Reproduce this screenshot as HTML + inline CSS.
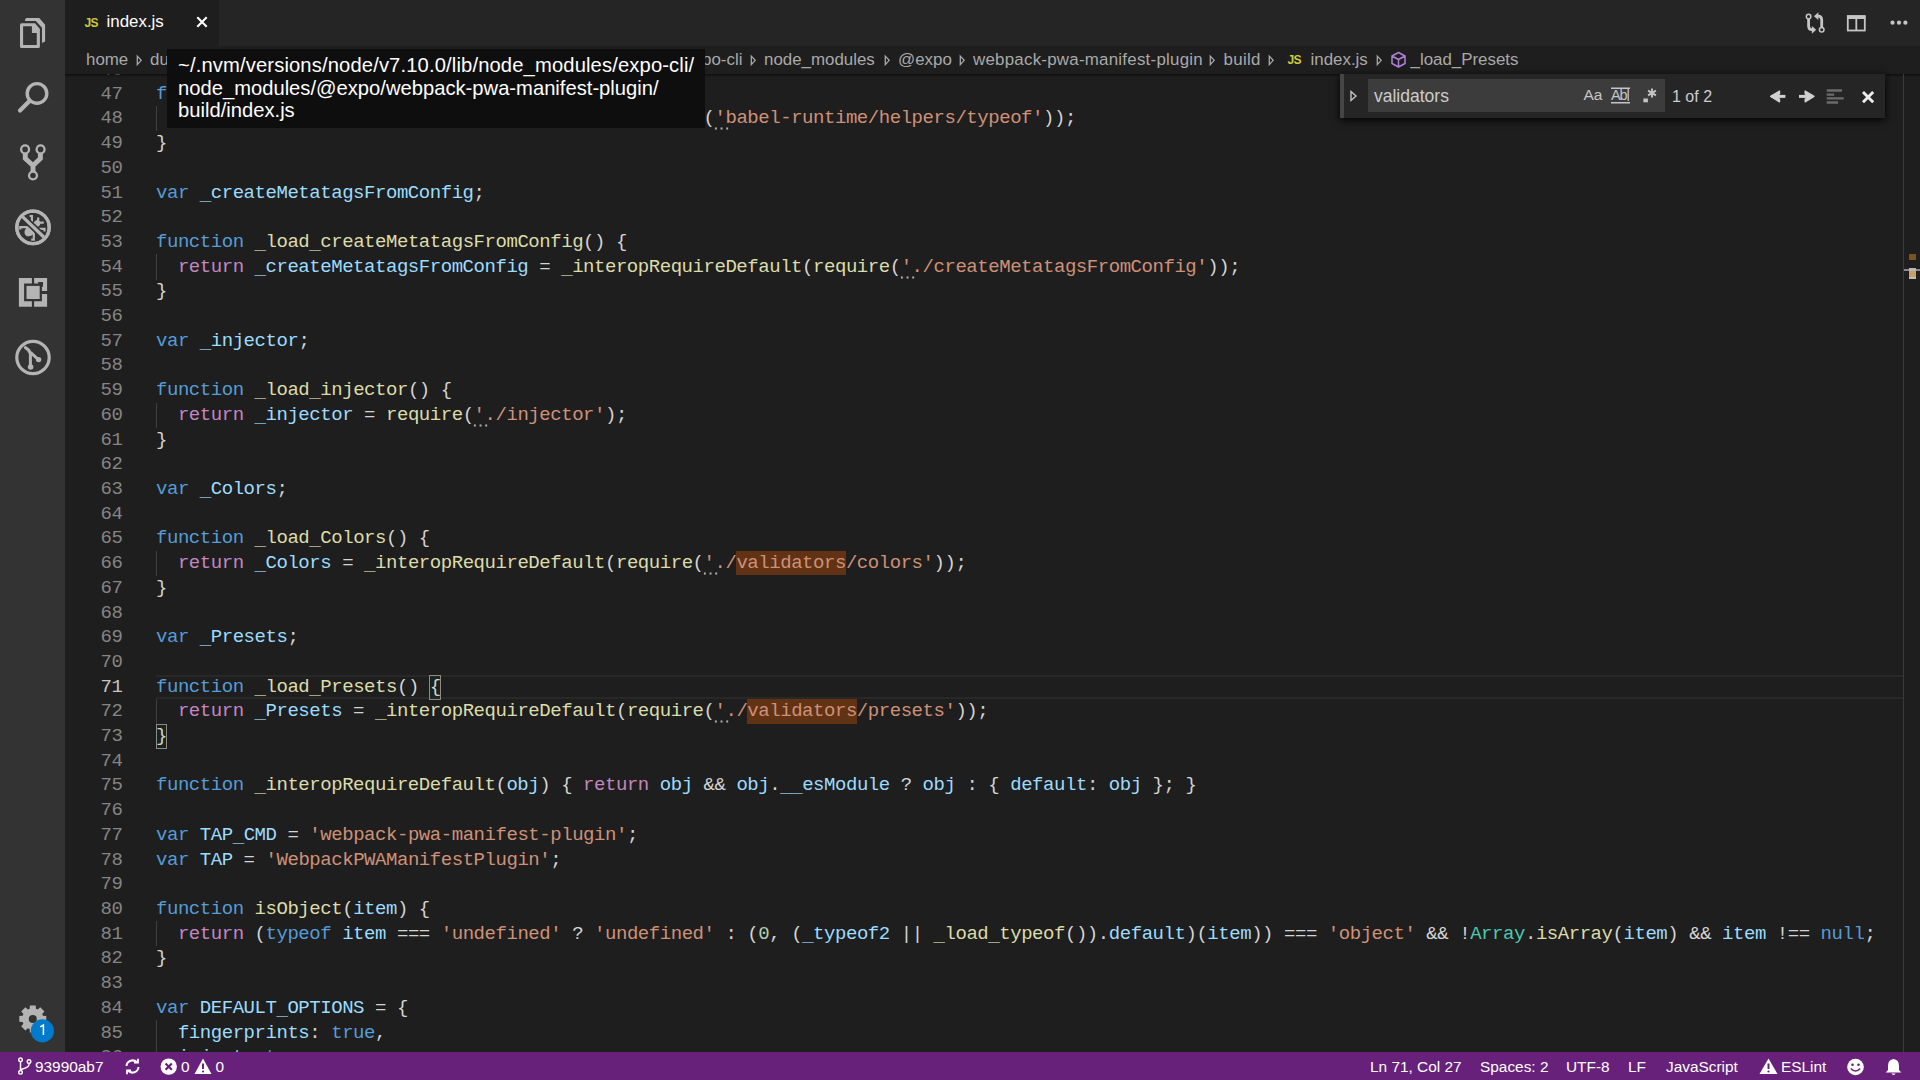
<!DOCTYPE html>
<html><head><meta charset="utf-8"><title>index.js</title><style>
*{margin:0;padding:0;box-sizing:border-box}
html,body{width:1920px;height:1080px;overflow:hidden;background:#1e1e1e}
body{position:relative;font-family:"Liberation Sans",sans-serif}
.abs{position:absolute}
#act{left:0;top:0;width:65px;height:1052px;background:#333333}
#tabs{left:65px;top:0;width:1855px;height:46px;background:#252526}
#tab{left:65px;top:0;width:154px;height:46px;background:#1e1e1e}
#bc{left:65px;top:46px;width:1855px;height:28px;background:#1e1e1e}
#ed{left:65px;top:74px;width:1855px;height:978px;overflow:hidden;background:#1e1e1e}
#edin{position:absolute;left:-65px;top:-74px;width:1920px;height:1080px}
.ln{position:absolute;left:156.0px;height:24.7px;line-height:24.7px;font-family:"Liberation Mono",monospace;font-size:19.000px;letter-spacing:-0.4520px;white-space:pre;padding-top:1px}
.gn{position:absolute;left:60px;width:62.5px;text-align:right;height:24.7px;line-height:24.7px;font-family:"Liberation Mono",monospace;font-size:19.000px;letter-spacing:-0.4520px;white-space:pre;padding-top:1px}
.u{position:relative;top:2.4px;opacity:0.7;font-style:normal}
.ig{position:absolute;left:156px;width:1px;height:25.2px;background:#404040}
.hint{position:absolute;width:17px;height:3px;background-image:radial-gradient(circle,#b0b0b0 0.9px,transparent 1.35px);background-size:5.7px 3px}
.fm{position:absolute;height:24.7px;background:rgba(234,92,0,0.33)}
.cl{position:absolute;left:156px;width:1747px;height:24px;border-top:2.7px solid #282828;border-bottom:2.7px solid #282828}
.bm{position:absolute;width:11.3px;height:24.6px;border:1.3px solid #8a8a8a;background:rgba(0,100,0,0.1)}
#shadow{left:65px;top:74px;width:1855px;height:3px;background:linear-gradient(rgba(0,0,0,0.55),rgba(0,0,0,0))}
#ruler{left:1903px;top:74px;width:1px;height:978px;background:#3a3a3a}
#status{left:0;top:1052px;width:1920px;height:28px;background:#68217a;color:#fff;font-size:15.4px}
.st{position:absolute;top:1px;line-height:28px;white-space:pre}
#tip{left:167px;top:49px;width:538px;height:78.5px;background:#0e0e0e;color:#fff;font-size:20.2px;line-height:22.6px;padding:5px 0 0 11px;white-space:pre}
#find{left:1340px;top:74px;width:545px;height:44px;background:#252526;box-shadow:0 2px 8px #000;border-left:4px solid #454545}
#findin{left:1368px;top:79px;width:297px;height:33px;background:#3c3c3c}
.ui{position:absolute;white-space:pre;font-size:16.9px}
.bct{top:4px}
.chev{position:absolute;top:0}
</style></head>
<body>
<div id="act" class="abs">
<svg width="65" height="1052" style="position:absolute;left:0;top:0" fill="none" stroke="#b4b4b4">
 <!-- explorer -->
 <path fill-rule="evenodd" fill="#b4b4b4" stroke="none" d="M21.6 23.3 H35 L39.9 29 V46.4 Q39.9 48 38.3 48 H21.6 Q20 48 20 46.4 V24.9 Q20 23.3 21.6 23.3 Z M23.1 26.2 V44.9 H36.8 V33 H31.9 V26.2 Z"/>
 <path fill="#b4b4b4" stroke="none" d="M26.8 18 H39.3 L45.1 24.8 V41.6 L42 42.9 V27.7 L35.8 21.1 H25 Q25 18 26.8 18 Z"/>
 <!-- search -->
 <circle cx="37" cy="93.4" r="9.8" stroke-width="3.4"/>
 <path d="M29.5 101 L20 110.5" stroke-width="4.2" stroke-linecap="round"/>
 <!-- git -->
 <circle cx="25.1" cy="149.4" r="3.95" stroke-width="2.3"/>
 <circle cx="40.6" cy="149.4" r="3.95" stroke-width="2.3"/>
 <circle cx="33" cy="175.5" r="3.95" stroke-width="2.3"/>
 <path d="M25.3 153 V158.5 L33 165.5 V171.5 M40.4 153 V158.5 L33 165.5" stroke-width="4.9" stroke-linejoin="miter"/>
 <!-- debug -->
 <circle cx="33" cy="227.4" r="16.2" stroke-width="3.2"/>
 <path d="M20.3 229.5 V227.1 H27.8 M33.8 233 V239.6 H31.2 M29.6 216 H31.9 V221.8 M38.2 217.4 V221.8 M39 222.7 H43.8 M38.9 228.9 H44.5 V231.6" stroke-width="2.2"/>
 <ellipse cx="29.6" cy="231.2" rx="5.6" ry="4.6" transform="rotate(-45 29.6 231.2)" fill="#b4b4b4" stroke="none"/>
 <ellipse cx="36.8" cy="223.8" rx="3.8" ry="3.2" transform="rotate(-45 36.8 223.8)" fill="#b4b4b4" stroke="none"/>
 <path d="M22.4 216.6 L43.8 237" stroke="#333333" stroke-width="6.6"/>
 <path d="M22.2 216.4 L44 237.2" stroke-width="3.3"/>
 <circle cx="33" cy="227.4" r="16.2" stroke-width="3.2"/>
 <!-- extensions -->
 <path fill="#b4b4b4" stroke="none" d="M18.9 277.9 H31.9 V283.5 H24.1 V301.3 H31.9 V306.8 H18.9 Z M34.1 277.9 H47.1 V291.1 H41.9 V286.8 H43 V282 H38.2 V283.5 H34.1 Z M41.9 293.9 H47.1 V306.8 H34.1 V301.3 H41.9 Z"/>
 <rect x="26.5" y="285.9" width="13.2" height="13.1" fill="#b4b4b4" stroke="none"/>
 <!-- gitlens -->
 <circle cx="33" cy="357.5" r="16.2" stroke-width="3.2"/>
 <path d="M25.4 347.6 Q29.6 349.8 30.4 353.8 V366 M31 352.8 L38.2 359.3" stroke-width="3" stroke-linecap="round"/>
 <circle cx="38.6" cy="359.6" r="2.7" fill="#b4b4b4" stroke="none"/>
 <circle cx="30.6" cy="367" r="2.8" fill="#b4b4b4" stroke="none"/>
</svg>
<svg width="65" height="70" style="position:absolute;left:0;top:985px">
 <g transform="translate(32.8,33.9)" fill="#b4b4b4">
  <path fill-rule="evenodd" d="M-3.13 -10.13 L-2.94 -13.48 L2.94 -13.48 L3.13 -10.13 L4.95 -9.38 L7.45 -11.62 L11.62 -7.45 L9.38 -4.95 L10.13 -3.13 L13.48 -2.94 L13.48 2.94 L10.13 3.13 L9.38 4.95 L11.62 7.45 L7.45 11.62 L4.95 9.38 L3.13 10.13 L2.94 13.48 L-2.94 13.48 L-3.13 10.13 L-4.95 9.38 L-7.45 11.62 L-11.62 7.45 L-9.38 4.95 L-10.13 3.13 L-13.48 2.94 L-13.48 -2.94 L-10.13 -3.13 L-9.38 -4.95 L-11.62 -7.45 L-7.45 -11.62 L-4.95 -9.38 Z M4 0 A4 4 0 1 0 -4 0 A4 4 0 1 0 4 0 Z"/>
 </g>
 <circle cx="42.4" cy="45.9" r="11.6" fill="#007acc"/>
 <path d="M40.2 41.8 L43.4 40 V50" fill="none" stroke="#fff" stroke-width="1.5"/>
</svg>
</div>

<div id="tabs" class="abs">
 <svg width="60" height="46" style="position:absolute;left:1740px;top:0" fill="none" stroke="#c5c5c5">
  <circle cx="68" cy="16" r="2.3" stroke-width="1.4"/>
 </svg>
</div>
<div id="tab" class="abs">
 <div class="ui" style="left:19.5px;top:15.5px;font-size:12px;font-weight:bold;color:#cbcb41;letter-spacing:-0.6px">JS</div>
 <div class="ui" style="left:41.5px;top:12px;color:#ffffff">index.js</div>
 <svg width="14" height="14" style="position:absolute;left:130px;top:15.3px"><path d="M2.3 2.3 L11.7 11.7 M11.7 2.3 L2.3 11.7" stroke="#fff" stroke-width="2.1"/></svg>
</div>
<svg width="120" height="46" style="position:absolute;left:1800px;top:0" fill="none" stroke="#c5c5c5">
 <circle cx="8.6" cy="16.6" r="2.3" stroke-width="1.5"/>
 <circle cx="21.7" cy="29.8" r="2.3" stroke-width="1.5"/>
 <path d="M8.6 19 V26 Q8.6 29.8 12.2 29.8 H13" stroke-width="2.8"/>
 <path d="M11.9 25.9 L16.2 29.8 L11.9 33.7 Z" fill="#c5c5c5" stroke="none"/>
 <path d="M21.7 27.4 V20 Q21.7 16.2 18.2 16.2 H17.4" stroke-width="2.8"/>
 <path d="M18.4 12.3 L13.9 16.2 L18.4 20.1 Z" fill="#c5c5c5" stroke="none"/>
 <rect x="47.8" y="16" width="17" height="14.5" stroke-width="1.8"/>
 <path d="M47 17.5 H65.5" stroke-width="3"/>
 <path d="M56.3 18 V30.5" stroke-width="1.8"/>
 <circle cx="92.5" cy="22.7" r="2.1" fill="#c5c5c5" stroke="none"/>
 <circle cx="99" cy="22.7" r="2.1" fill="#c5c5c5" stroke="none"/>
 <circle cx="105.4" cy="22.7" r="2.1" fill="#c5c5c5" stroke="none"/>
</svg>

<div id="bc" class="abs" style="color:#a9a9a9">
 <div class="ui bct" style="left:21px">home</div>
 <svg class="chev" style="left:70.85px" width="8" height="28"><path d="M1.3 10.1 L5.2 14.35 L1.3 18.6 Z" fill="none" stroke="#a9a9a9" stroke-width="1.3"/></svg>
 <div class="ui bct" style="left:85px">dustin</div>
 <div class="ui bct" style="left:619.2px">expo-cli</div>
 <svg class="chev" style="left:684.95px" width="8" height="28"><path d="M1.3 10.1 L5.2 14.35 L1.3 18.6 Z" fill="none" stroke="#a9a9a9" stroke-width="1.3"/></svg>
 <div class="ui bct" style="left:699px">node_modules</div>
 <svg class="chev" style="left:819.05px" width="8" height="28"><path d="M1.3 10.1 L5.2 14.35 L1.3 18.6 Z" fill="none" stroke="#a9a9a9" stroke-width="1.3"/></svg>
 <div class="ui bct" style="left:833px">@expo</div>
 <svg class="chev" style="left:894.05px" width="8" height="28"><path d="M1.3 10.1 L5.2 14.35 L1.3 18.6 Z" fill="none" stroke="#a9a9a9" stroke-width="1.3"/></svg>
 <div class="ui bct" style="left:908px;letter-spacing:0.24px">webpack-pwa-manifest-plugin</div>
 <svg class="chev" style="left:1143.85px" width="8" height="28"><path d="M1.3 10.1 L5.2 14.35 L1.3 18.6 Z" fill="none" stroke="#a9a9a9" stroke-width="1.3"/></svg>
 <div class="ui bct" style="left:1158.5px;letter-spacing:0.3px">build</div>
 <svg class="chev" style="left:1202.85px" width="8" height="28"><path d="M1.3 10.1 L5.2 14.35 L1.3 18.6 Z" fill="none" stroke="#a9a9a9" stroke-width="1.3"/></svg>
 <div class="ui" style="left:1222.5px;top:6.8px;font-size:12px;font-weight:bold;color:#cbcb41;letter-spacing:-0.6px">JS</div>
 <div class="ui bct" style="left:1245.5px">index.js</div>
 <svg class="chev" style="left:1311.15px" width="8" height="28"><path d="M1.3 10.1 L5.2 14.35 L1.3 18.6 Z" fill="none" stroke="#a9a9a9" stroke-width="1.3"/></svg>
 <svg style="position:absolute;left:1325px;top:5px" width="17" height="18"><path d="M8.5 1.5 L15 5 V12.5 L8.5 16 L2 12.5 V5 Z M2 5 L8.5 8.5 L15 5 M8.5 8.5 V16" fill="none" stroke="#b180d7" stroke-width="1.5" stroke-linejoin="round"/></svg>
 <div class="ui bct" style="left:1345.5px">_load_Presets</div>
</div>

<div id="ed" class="abs"><div id="edin">
<div class="ig" style="top:106.20px"></div><div class="hint" style="left:712.85px;top:126.70px"></div><div class="ig" style="top:254.40px"></div><div class="hint" style="left:898.96px;top:275.70px"></div><div class="ig" style="top:402.60px"></div><div class="hint" style="left:471.99px;top:423.70px"></div><div class="ig" style="top:550.80px"></div><div class="hint" style="left:701.90px;top:571.70px"></div><div class="fm" style="left:736.24px;top:550.80px;width:109.48px"></div><div class="ig" style="top:699.00px"></div><div class="hint" style="left:712.85px;top:719.70px"></div><div class="fm" style="left:747.19px;top:699.00px;width:109.48px"></div><div class="ig" style="top:921.30px"></div><div class="ig" style="top:1020.10px"></div><div class="ig" style="top:1044.80px"></div><div class="cl" style="top:675px"></div><div class="bm" style="left:429.30px;top:675px"></div><div class="bm" style="left:155.60px;top:724.4px"></div>
<div class="gn" style="top:57px;color:#858585">46</div><div class="gn" style="top:81px;color:#858585">47</div><div class="gn" style="top:105px;color:#858585">48</div><div class="gn" style="top:130px;color:#858585">49</div><div class="gn" style="top:155px;color:#858585">50</div><div class="gn" style="top:180px;color:#858585">51</div><div class="gn" style="top:204px;color:#858585">52</div><div class="gn" style="top:229px;color:#858585">53</div><div class="gn" style="top:254px;color:#858585">54</div><div class="gn" style="top:278px;color:#858585">55</div><div class="gn" style="top:303px;color:#858585">56</div><div class="gn" style="top:328px;color:#858585">57</div><div class="gn" style="top:352px;color:#858585">58</div><div class="gn" style="top:377px;color:#858585">59</div><div class="gn" style="top:402px;color:#858585">60</div><div class="gn" style="top:427px;color:#858585">61</div><div class="gn" style="top:451px;color:#858585">62</div><div class="gn" style="top:476px;color:#858585">63</div><div class="gn" style="top:501px;color:#858585">64</div><div class="gn" style="top:525px;color:#858585">65</div><div class="gn" style="top:550px;color:#858585">66</div><div class="gn" style="top:575px;color:#858585">67</div><div class="gn" style="top:600px;color:#858585">68</div><div class="gn" style="top:624px;color:#858585">69</div><div class="gn" style="top:649px;color:#858585">70</div><div class="gn" style="top:674px;color:#c6c6c6">71</div><div class="gn" style="top:698px;color:#858585">72</div><div class="gn" style="top:723px;color:#858585">73</div><div class="gn" style="top:748px;color:#858585">74</div><div class="gn" style="top:772px;color:#858585">75</div><div class="gn" style="top:797px;color:#858585">76</div><div class="gn" style="top:822px;color:#858585">77</div><div class="gn" style="top:847px;color:#858585">78</div><div class="gn" style="top:871px;color:#858585">79</div><div class="gn" style="top:896px;color:#858585">80</div><div class="gn" style="top:921px;color:#858585">81</div><div class="gn" style="top:945px;color:#858585">82</div><div class="gn" style="top:970px;color:#858585">83</div><div class="gn" style="top:995px;color:#858585">84</div><div class="gn" style="top:1020px;color:#858585">85</div><div class="gn" style="top:1044px;color:#858585">86</div>
<div class="ln" style="top:57px"></div><div class="ln" style="top:81px"><span style="color:#569cd6">function</span><span style="color:#d4d4d4"> </span><span style="color:#dcdcaa"><i class="u">_</i>load<i class="u">_</i>typeof</span><span style="color:#d4d4d4">() {</span></div><div class="ln" style="top:105px"><span style="color:#d4d4d4">  </span><span style="color:#c586c0">return</span><span style="color:#d4d4d4"> </span><span style="color:#9cdcfe"><i class="u">_</i>typeof2</span><span style="color:#d4d4d4"> = </span><span style="color:#dcdcaa"><i class="u">_</i>interopRequireDefault</span><span style="color:#d4d4d4">(</span><span style="color:#dcdcaa">require</span><span style="color:#d4d4d4">(</span><span style="color:#ce9178">'babel-runtime/helpers/typeof'</span><span style="color:#d4d4d4">));</span></div><div class="ln" style="top:130px"><span style="color:#d4d4d4">}</span></div><div class="ln" style="top:155px"></div><div class="ln" style="top:180px"><span style="color:#569cd6">var</span><span style="color:#d4d4d4"> </span><span style="color:#9cdcfe"><i class="u">_</i>createMetatagsFromConfig</span><span style="color:#d4d4d4">;</span></div><div class="ln" style="top:204px"></div><div class="ln" style="top:229px"><span style="color:#569cd6">function</span><span style="color:#d4d4d4"> </span><span style="color:#dcdcaa"><i class="u">_</i>load<i class="u">_</i>createMetatagsFromConfig</span><span style="color:#d4d4d4">() {</span></div><div class="ln" style="top:254px"><span style="color:#d4d4d4">  </span><span style="color:#c586c0">return</span><span style="color:#d4d4d4"> </span><span style="color:#9cdcfe"><i class="u">_</i>createMetatagsFromConfig</span><span style="color:#d4d4d4"> = </span><span style="color:#dcdcaa"><i class="u">_</i>interopRequireDefault</span><span style="color:#d4d4d4">(</span><span style="color:#dcdcaa">require</span><span style="color:#d4d4d4">(</span><span style="color:#ce9178">'./createMetatagsFromConfig'</span><span style="color:#d4d4d4">));</span></div><div class="ln" style="top:278px"><span style="color:#d4d4d4">}</span></div><div class="ln" style="top:303px"></div><div class="ln" style="top:328px"><span style="color:#569cd6">var</span><span style="color:#d4d4d4"> </span><span style="color:#9cdcfe"><i class="u">_</i>injector</span><span style="color:#d4d4d4">;</span></div><div class="ln" style="top:352px"></div><div class="ln" style="top:377px"><span style="color:#569cd6">function</span><span style="color:#d4d4d4"> </span><span style="color:#dcdcaa"><i class="u">_</i>load<i class="u">_</i>injector</span><span style="color:#d4d4d4">() {</span></div><div class="ln" style="top:402px"><span style="color:#d4d4d4">  </span><span style="color:#c586c0">return</span><span style="color:#d4d4d4"> </span><span style="color:#9cdcfe"><i class="u">_</i>injector</span><span style="color:#d4d4d4"> = </span><span style="color:#dcdcaa">require</span><span style="color:#d4d4d4">(</span><span style="color:#ce9178">'./injector'</span><span style="color:#d4d4d4">);</span></div><div class="ln" style="top:427px"><span style="color:#d4d4d4">}</span></div><div class="ln" style="top:451px"></div><div class="ln" style="top:476px"><span style="color:#569cd6">var</span><span style="color:#d4d4d4"> </span><span style="color:#9cdcfe"><i class="u">_</i>Colors</span><span style="color:#d4d4d4">;</span></div><div class="ln" style="top:501px"></div><div class="ln" style="top:525px"><span style="color:#569cd6">function</span><span style="color:#d4d4d4"> </span><span style="color:#dcdcaa"><i class="u">_</i>load<i class="u">_</i>Colors</span><span style="color:#d4d4d4">() {</span></div><div class="ln" style="top:550px"><span style="color:#d4d4d4">  </span><span style="color:#c586c0">return</span><span style="color:#d4d4d4"> </span><span style="color:#9cdcfe"><i class="u">_</i>Colors</span><span style="color:#d4d4d4"> = </span><span style="color:#dcdcaa"><i class="u">_</i>interopRequireDefault</span><span style="color:#d4d4d4">(</span><span style="color:#dcdcaa">require</span><span style="color:#d4d4d4">(</span><span style="color:#ce9178">'./validators/colors'</span><span style="color:#d4d4d4">));</span></div><div class="ln" style="top:575px"><span style="color:#d4d4d4">}</span></div><div class="ln" style="top:600px"></div><div class="ln" style="top:624px"><span style="color:#569cd6">var</span><span style="color:#d4d4d4"> </span><span style="color:#9cdcfe"><i class="u">_</i>Presets</span><span style="color:#d4d4d4">;</span></div><div class="ln" style="top:649px"></div><div class="ln" style="top:674px"><span style="color:#569cd6">function</span><span style="color:#d4d4d4"> </span><span style="color:#dcdcaa"><i class="u">_</i>load<i class="u">_</i>Presets</span><span style="color:#d4d4d4">() {</span></div><div class="ln" style="top:698px"><span style="color:#d4d4d4">  </span><span style="color:#c586c0">return</span><span style="color:#d4d4d4"> </span><span style="color:#9cdcfe"><i class="u">_</i>Presets</span><span style="color:#d4d4d4"> = </span><span style="color:#dcdcaa"><i class="u">_</i>interopRequireDefault</span><span style="color:#d4d4d4">(</span><span style="color:#dcdcaa">require</span><span style="color:#d4d4d4">(</span><span style="color:#ce9178">'./validators/presets'</span><span style="color:#d4d4d4">));</span></div><div class="ln" style="top:723px"><span style="color:#d4d4d4">}</span></div><div class="ln" style="top:748px"></div><div class="ln" style="top:772px"><span style="color:#569cd6">function</span><span style="color:#d4d4d4"> </span><span style="color:#dcdcaa"><i class="u">_</i>interopRequireDefault</span><span style="color:#d4d4d4">(</span><span style="color:#9cdcfe">obj</span><span style="color:#d4d4d4">) { </span><span style="color:#c586c0">return</span><span style="color:#d4d4d4"> </span><span style="color:#9cdcfe">obj</span><span style="color:#d4d4d4"> &amp;&amp; </span><span style="color:#9cdcfe">obj</span><span style="color:#d4d4d4">.</span><span style="color:#9cdcfe"><i class="u">_</i><i class="u">_</i>esModule</span><span style="color:#d4d4d4"> ? </span><span style="color:#9cdcfe">obj</span><span style="color:#d4d4d4"> : { </span><span style="color:#9cdcfe">default</span><span style="color:#d4d4d4">: </span><span style="color:#9cdcfe">obj</span><span style="color:#d4d4d4"> }; }</span></div><div class="ln" style="top:797px"></div><div class="ln" style="top:822px"><span style="color:#569cd6">var</span><span style="color:#d4d4d4"> </span><span style="color:#9cdcfe">TAP<i class="u">_</i>CMD</span><span style="color:#d4d4d4"> = </span><span style="color:#ce9178">'webpack-pwa-manifest-plugin'</span><span style="color:#d4d4d4">;</span></div><div class="ln" style="top:847px"><span style="color:#569cd6">var</span><span style="color:#d4d4d4"> </span><span style="color:#9cdcfe">TAP</span><span style="color:#d4d4d4"> = </span><span style="color:#ce9178">'WebpackPWAManifestPlugin'</span><span style="color:#d4d4d4">;</span></div><div class="ln" style="top:871px"></div><div class="ln" style="top:896px"><span style="color:#569cd6">function</span><span style="color:#d4d4d4"> </span><span style="color:#dcdcaa">isObject</span><span style="color:#d4d4d4">(</span><span style="color:#9cdcfe">item</span><span style="color:#d4d4d4">) {</span></div><div class="ln" style="top:921px"><span style="color:#d4d4d4">  </span><span style="color:#c586c0">return</span><span style="color:#d4d4d4"> (</span><span style="color:#569cd6">typeof</span><span style="color:#d4d4d4"> </span><span style="color:#9cdcfe">item</span><span style="color:#d4d4d4"> === </span><span style="color:#ce9178">'undefined'</span><span style="color:#d4d4d4"> ? </span><span style="color:#ce9178">'undefined'</span><span style="color:#d4d4d4"> : (</span><span style="color:#b5cea8">0</span><span style="color:#d4d4d4">, (</span><span style="color:#9cdcfe"><i class="u">_</i>typeof2</span><span style="color:#d4d4d4"> || </span><span style="color:#dcdcaa"><i class="u">_</i>load<i class="u">_</i>typeof</span><span style="color:#d4d4d4">()).</span><span style="color:#9cdcfe">default</span><span style="color:#d4d4d4">)(</span><span style="color:#9cdcfe">item</span><span style="color:#d4d4d4">)) === </span><span style="color:#ce9178">'object'</span><span style="color:#d4d4d4"> &amp;&amp; !</span><span style="color:#4ec9b0">Array</span><span style="color:#d4d4d4">.</span><span style="color:#dcdcaa">isArray</span><span style="color:#d4d4d4">(</span><span style="color:#9cdcfe">item</span><span style="color:#d4d4d4">) &amp;&amp; </span><span style="color:#9cdcfe">item</span><span style="color:#d4d4d4"> !== </span><span style="color:#569cd6">null</span><span style="color:#d4d4d4">;</span></div><div class="ln" style="top:945px"><span style="color:#d4d4d4">}</span></div><div class="ln" style="top:970px"></div><div class="ln" style="top:995px"><span style="color:#569cd6">var</span><span style="color:#d4d4d4"> </span><span style="color:#9cdcfe">DEFAULT<i class="u">_</i>OPTIONS</span><span style="color:#d4d4d4"> = {</span></div><div class="ln" style="top:1020px"><span style="color:#d4d4d4">  </span><span style="color:#9cdcfe">fingerprints</span><span style="color:#d4d4d4">: </span><span style="color:#569cd6">true</span><span style="color:#d4d4d4">,</span></div><div class="ln" style="top:1044px"><span style="color:#d4d4d4">  </span><span style="color:#9cdcfe">inject</span><span style="color:#d4d4d4">: </span><span style="color:#569cd6">true</span><span style="color:#d4d4d4">,</span></div>
</div></div>
<div id="shadow" class="abs"></div>
<div id="ruler" class="abs"></div>
<div class="abs" style="left:1909px;top:254px;width:7px;height:6px;background:#7a5420"></div>
<div class="abs" style="left:1904px;top:269.2px;width:16px;height:2px;background:#8a8a8a"></div>
<div class="abs" style="left:1909px;top:268.3px;width:7px;height:11px;background:#c8a064"></div>
<div class="abs" style="left:1909px;top:268.3px;width:7px;height:2.4px;background:#b8b8b8"></div>
<div class="abs" style="left:1909px;top:277px;width:7px;height:2.2px;background:#bbb"></div>

<div id="status" class="abs">
 <svg style="position:absolute;left:17px;top:5px" width="16" height="18" fill="none" stroke="#fff" stroke-width="1.4">
  <circle cx="3.5" cy="2.8" r="1.8"/><circle cx="3.5" cy="15.3" r="1.8"/><circle cx="12" cy="4.5" r="1.8"/>
  <path d="M3.5 4.6 V13.5 M12 6.3 V7.5 Q12 10.5 4 12.5"/>
 </svg>
 <div class="st" style="left:35px">93990ab7</div>
 <svg style="position:absolute;left:124px;top:6px" width="17" height="17" fill="none" stroke="#fff" stroke-width="2">
  <path d="M2.5 8 A6 6 0 0 1 13 4.5"/><path d="M14.5 9 A6 6 0 0 1 4 12.5"/>
  <path d="M10 4.5 H14 V0.8" stroke-width="1.8"/><path d="M7 12.5 H3 V16.2" stroke-width="1.8"/>
 </svg>
 <svg style="position:absolute;left:160px;top:6px" width="18" height="18"><circle cx="8.7" cy="8.6" r="8.2" fill="#fff"/><path d="M5.6 5.5 L11.8 11.7 M11.8 5.5 L5.6 11.7" stroke="#68217a" stroke-width="2.2"/></svg>
 <div class="st" style="left:181px">0</div>
 <svg style="position:absolute;left:194px;top:6px" width="18" height="17"><path d="M9 0.5 L17.5 16 H0.5 Z" fill="#fff"/><path d="M9 5.5 V11" stroke="#68217a" stroke-width="2"/><circle cx="9" cy="13.5" r="1.1" fill="#68217a"/></svg>
 <div class="st" style="left:215.5px">0</div>
 <div class="st" style="left:1370px">Ln 71, Col 27</div>
 <div class="st" style="left:1480px">Spaces: 2</div>
 <div class="st" style="left:1566px">UTF-8</div>
 <div class="st" style="left:1628px">LF</div>
 <div class="st" style="left:1666px">JavaScript</div>
 <svg style="position:absolute;left:1759px;top:6px" width="19" height="17"><path d="M9.5 0.5 L18.5 16 H0.5 Z" fill="#fff"/><path d="M9.5 5.5 V11" stroke="#68217a" stroke-width="2"/><circle cx="9.5" cy="13.5" r="1.1" fill="#68217a"/></svg>
 <div class="st" style="left:1781px">ESLint</div>
 <svg style="position:absolute;left:1846px;top:5.5px" width="19" height="18"><circle cx="9.5" cy="9" r="8.3" fill="#fff"/><circle cx="6.5" cy="6.8" r="1.3" fill="#68217a"/><circle cx="12.5" cy="6.8" r="1.3" fill="#68217a"/><path d="M4.8 10.5 Q9.5 15.5 14.2 10.5" fill="none" stroke="#68217a" stroke-width="1.6"/></svg>
 <svg style="position:absolute;left:1884px;top:5.5px" width="19" height="18"><path d="M9.5 1 Q15 1.5 15 8 V12 L17.3 14.5 H1.7 L4 12 V8 Q4 1.5 9.5 1 Z" fill="#fff"/><path d="M7.5 15.5 Q9.5 18.5 11.5 15.5 Z" fill="#fff"/></svg>
</div>

<div id="find" class="abs"></div>
<div id="findin" class="abs"></div>
<svg style="position:absolute;left:1348px;top:89px" width="10" height="14"><path d="M3 2.5 L8 7 L3 11.5 Z" fill="none" stroke="#c5c5c5" stroke-width="1.4"/></svg>
<div class="ui" style="left:1374px;top:86px;color:#cccccc;font-size:17.5px">validators</div>
<div class="ui" style="left:1583.5px;top:86.3px;color:#c5c5c5;font-size:15.5px">Aa</div>
<svg style="position:absolute;left:1610px;top:86px" width="22" height="20"><path d="M1 2.3 H20 M1 16.8 H20" stroke="#c5c5c5" stroke-width="1.5"/><path d="M18.2 3 V15" stroke="#c5c5c5" stroke-width="1.3"/></svg>
<div class="ui" style="left:1611px;top:86.7px;color:#c5c5c5;font-size:14.5px;letter-spacing:-1.2px">Ab</div>
<svg style="position:absolute;left:1642px;top:86px" width="16" height="18"><rect x="1.4" y="12.5" width="4.5" height="3.8" fill="#c5c5c5"/><path d="M10 2.5 V11.5 M6.1 4.6 L13.9 9.4 M13.9 4.6 L6.1 9.4" stroke="#c5c5c5" stroke-width="1.9"/></svg>
<div class="ui" style="left:1672px;top:88px;color:#cccccc;font-size:16px">1 of 2</div>
<svg style="position:absolute;left:1768px;top:80px" width="80" height="32">
 <path d="M3.2 16.4 H17.4" stroke="#d0d0d0" stroke-width="3"/>
 <path d="M2.7 16.4 L11.5 11.1 L11.5 13.8 L7.5 16.4 L11.5 19 L11.5 21.8 Z" fill="#d0d0d0" stroke="#d0d0d0" stroke-width="1.4" stroke-linejoin="round"/>
 <path d="M31 16.4 H45" stroke="#d0d0d0" stroke-width="3"/>
 <path d="M46 16.4 L37.2 11.1 L37.2 13.8 L41.2 16.4 L37.2 19 L37.2 21.8 Z" fill="#d0d0d0" stroke="#d0d0d0" stroke-width="1.4" stroke-linejoin="round"/>
 <path d="M58.7 10.5 H74 M58.7 14.6 H66.2 M58.7 18.4 H75.7 M58.7 22.5 H70.1" stroke="#6b6b6b" stroke-width="2.3"/>
</svg>
<svg style="position:absolute;left:1859px;top:88px" width="18" height="18"><path d="M4 4 L14.2 14.2 M14.2 4 L4 14.2" stroke="#ededed" stroke-width="2.9"/></svg>

<div id="tip" class="abs"><span style="letter-spacing:0.135px">~/.nvm/versions/node/v7.10.0/lib/node_modules/expo-cli/</span>
node_modules/@expo/webpack-pwa-manifest-plugin/
build/index.js</div>
</body></html>
